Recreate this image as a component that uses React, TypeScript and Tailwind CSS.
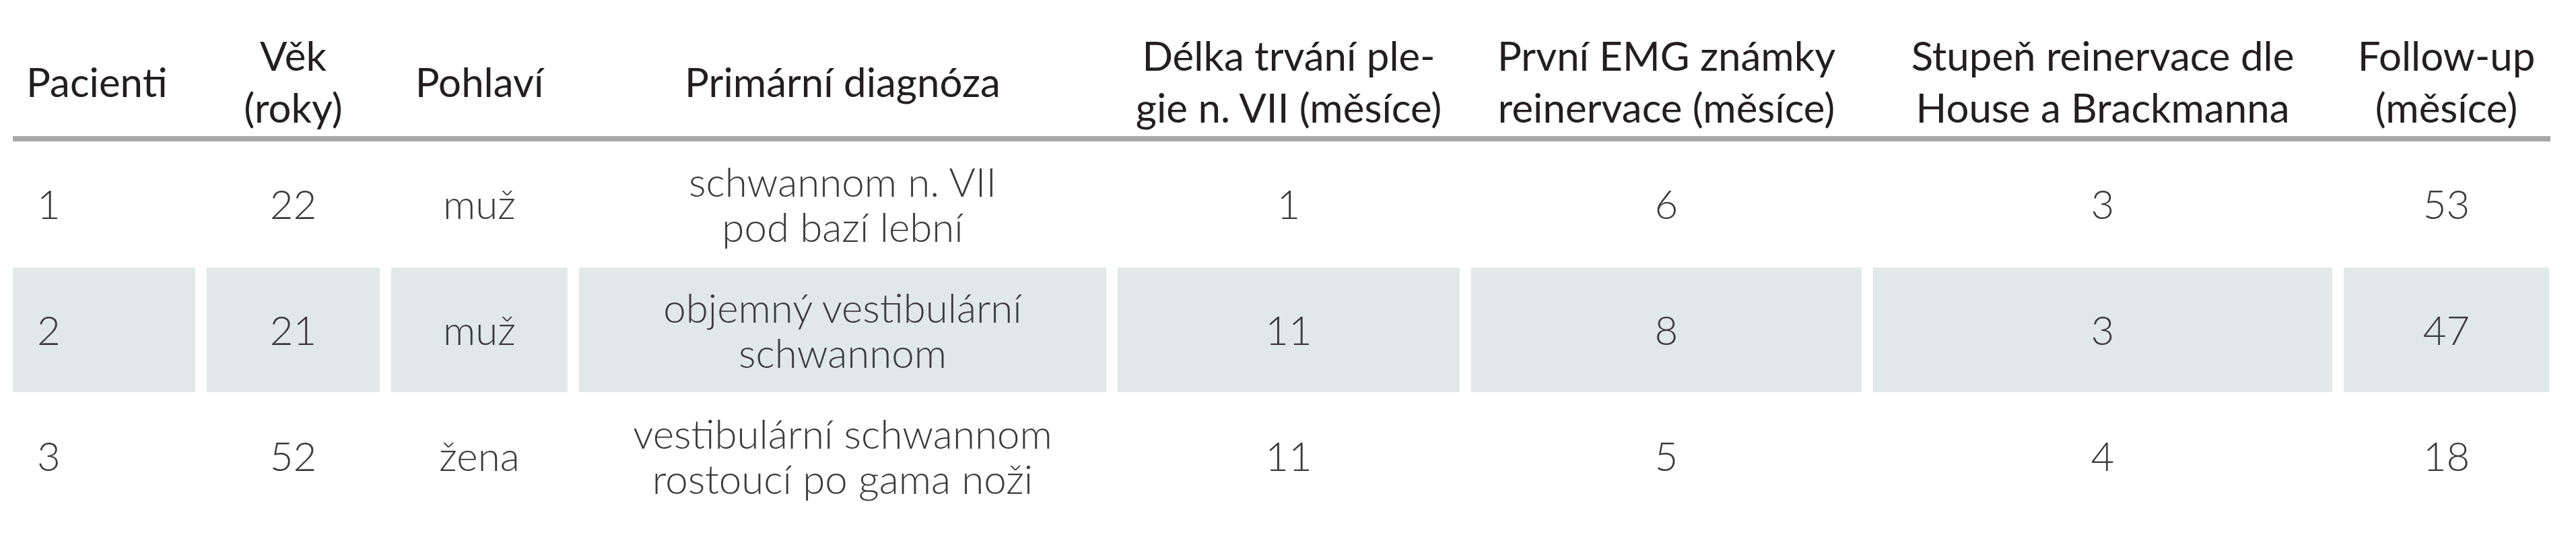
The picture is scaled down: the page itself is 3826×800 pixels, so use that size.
const cols = "grid grid-cols-[271px_257px_262px_783px_508px_580px_682px_305px] gap-x-[17px]";

const headers: React.ReactNode[] = [
  "Pacienti",
  <>Věk<br />(roky)</>,
  "Pohlaví",
  "Primární diagnóza",
  <>Délka trvání ple-<br />gie n. VII (měsíce)</>,
  <>První EMG známky<br />reinervace (měsíce)</>,
  <>Stupeň reinervace dle<br />House a Brackmanna</>,
  <>Follow-up<br />(měsíce)</>,
];

const rows: React.ReactNode[][] = [
  ["1", "22", "muž", <>schwannom n. VII<br />pod bazí lební</>, "1", "6", "3", "53"],
  ["2", "21", "muž", <>objemný vestibulární<br />schwannom</>, "11", "8", "3", "47"],
  ["3", "52", "žena", <>vestibulární schwannom<br />rostoucí po gama noži</>, "11", "5", "4", "18"],
];

export default function App() {
  return (
    <div className="w-[3826px] h-[800px] bg-white overflow-hidden font-['Lato','Open_Sans',sans-serif]">
      <div className="ml-[19px] w-[3769px]">
        {/* hlavička */}
        <div className={`${cols} h-[202px] pt-[40px] items-center text-[60px] leading-[77px] text-[#231f20]`}>
          {headers.map((h, i) => (
            <div key={i} className={i === 0 ? "pl-[20px] text-left" : "text-center"}>
              {h}
            </div>
          ))}
        </div>
        <div className="h-[8px] bg-[#a8a8a8]" />

        <div className="flex flex-col gap-[2px]">
          {rows.map((r, ri) => (
            <div key={ri} className={`${cols} h-[185px] text-[60px] leading-[67px] font-light text-[#3a3a3a]`}>
              {r.map((c, ci) => (
                <div
                  key={ci}
                  className={`flex items-center ${ci === 0 ? "justify-start pl-[36px]" : "justify-center text-center"} ${ri === 1 ? "bg-[#e1e8e8]" : ""}`}
                >
                  <div>{c}</div>
                </div>
              ))}
            </div>
          ))}
        </div>
      </div>
    </div>
  );
}
